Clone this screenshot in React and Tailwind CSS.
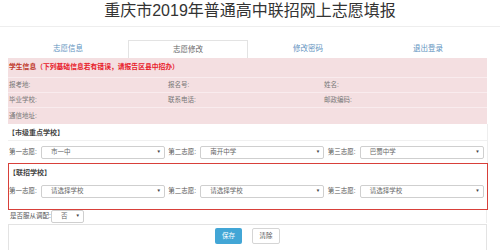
import React from "react";

const font = { fontFamily: '"Liberation Sans", "Noto Sans CJK SC", sans-serif' };

function Select({ value, w = "w-[124px]" }) {
  return (
    <div className={`${w} h-[13px] border border-[#cfcfcf] rounded-[2px] bg-white flex items-center justify-between pl-[9px] pr-[3px]`}>
      <span className="text-[6.5px] text-[#666] leading-none">{value}</span>
      <span className="text-[4.5px] text-[#444] leading-none">▼</span>
    </div>
  );
}

function Group({ label, value }) {
  return (
    <div className="w-[160px] flex items-center">
      <span className="w-[32px] text-[6.5px] text-[#555] leading-none whitespace-nowrap">{label}</span>
      <Select value={value} />
    </div>
  );
}

export default function App() {
  return (
    <div className="w-[500px] h-[250px] bg-white overflow-hidden" style={font}>
      <div className="h-[27px] border-b border-[#eeeeee] flex items-start justify-center pt-[2px]">
        <span className="text-[16px] leading-[18px] text-[#333]">重庆市2019年普通高中联招网上志愿填报</span>
      </div>
      <div className="ml-[8px] w-[480px] mt-[13px] flex h-[18px]">
        <div className="w-[120px] flex items-center justify-center text-[7.5px] text-[#5f93c0]">志愿信息</div>
        <div className="w-[120px] flex items-center justify-center text-[7.5px] text-[#666] border border-b-0 border-[#e3e3e3] bg-white">志愿修改</div>
        <div className="w-[120px] flex items-center justify-center text-[7.5px] text-[#5f93c0]">修改密码</div>
        <div className="w-[120px] flex items-center justify-center text-[7.5px] text-[#5f93c0]">退出登录</div>
      </div>
      <div className="ml-[8px] w-[479px] bg-[#f4dfe1] h-[66px] flex flex-col">
        <div className="h-[20px] flex items-center pl-[1px] border-b border-[#f9ecee]">
          <span className="text-[6.8px] font-bold text-[#c0392b] leading-none">学生信息</span>
          <span className="text-[6.8px] font-bold text-[#e8202a] leading-none">（下列基础信息若有错误，请报告区县中招办）</span>
        </div>
        <div className="h-[15px] flex items-center text-[6.5px] text-[#777] border-b border-[#f9ecee]">
          <span className="w-[160px] pl-[1px]">报考地:</span>
          <span className="w-[156px]">报名号:</span>
          <span>姓名:</span>
        </div>
        <div className="h-[15px] flex items-center text-[6.5px] text-[#777] border-b border-[#f9ecee]">
          <span className="w-[160px] pl-[1px]">毕业学校:</span>
          <span className="w-[156px]">联系电话:</span>
          <span>邮政编码:</span>
        </div>
        <div className="h-[15px] flex items-center text-[6.5px] text-[#777]">
          <span className="pl-[1px]">通信地址:</span>
        </div>
      </div>
      <div className="ml-[8px] w-[480px] border-r border-[#eeeeee]">
        <div className="h-[17px] flex items-center border-b border-[#f0f0f0]">
          <span className="text-[7px] font-bold text-[#444] leading-none">【市级重点学校】</span>
        </div>
        <div className="h-[22px] flex items-center pl-[1px]">
          <Group label="第一志愿:" value="市一中" />
          <Group label="第二志愿:" value="南开中学" />
          <Group label="第三志愿:" value="巴蜀中学" />
        </div>
      </div>
      <div className="ml-[8px] w-[480px] h-[47px] border-[1.5px] border-[#d8403a] flex flex-col">
        <div className="h-[17px] flex items-center">
          <span className="text-[7px] font-bold text-[#444] leading-none">【联招学校】</span>
        </div>
        <div className="h-[20px] flex items-center">
          <Group label="第一志愿:" value="请选择学校" />
          <Group label="第二志愿:" value="请选择学校" />
          <Group label="第三志愿:" value="请选择学校" />
        </div>
      </div>
      <div className="ml-[8px] w-[479px] border-r border-[#eeeeee] h-[13px] flex items-center">
        <span className="w-[43px] pl-[2px] text-[6.5px] text-[#555] whitespace-nowrap leading-none">是否服从调配:</span>
        <Select value="否" w="w-[33px]" />
      </div>
      <div className="ml-[8px] w-[479px] mt-[1px] border-t border-x border-[#e3e3e3] h-[40px] flex justify-center pt-[3px] gap-[10px]">
        <div className="w-[27px] h-[16px] rounded-[2px] bg-[#42a6d6] flex items-center justify-center text-[6.5px] text-white">保存</div>
        <div className="w-[28px] h-[16px] rounded-[2px] bg-white border border-[#d5d5d5] flex items-center justify-center text-[6.5px] text-[#555]">清除</div>
      </div>
    </div>
  );
}
